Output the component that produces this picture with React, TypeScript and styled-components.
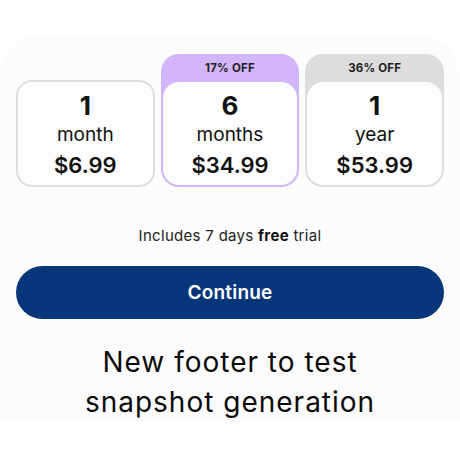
import React from "react";
import styled, { createGlobalStyle } from "styled-components";

const Global = createGlobalStyle`
  html, body { margin: 0; padding: 0; background: #ffffff; }
  body { font-family: Inter, "Noto Sans", sans-serif; color: #111111; }
  * { box-sizing: border-box; }
`;

const Sheet = styled.div`
  margin-top: 37px;
  background: #fcfcfc;
  border-radius: 36px 36px 0 0;
  padding: 17px 16px 0;
  height: 385px;
  display: flex;
  flex-direction: column;
`;

const PlanRow = styled.div`
  display: grid;
  grid-template-columns: repeat(3, 1fr);
  align-items: end;
  gap: 6px;
`;

const Plan = styled.div<{ $tone?: string }>`
  display: flex;
  flex-direction: column;
  border-radius: 18px;
  background: ${(p) => p.$tone ?? "transparent"};
  padding: ${(p) => (p.$tone ? "0 2px 2px" : "0")};
`;

const Badge = styled.div`
  height: 28px;
  display: flex;
  align-items: center;
  justify-content: center;
  font-size: 11.5px;
  font-weight: 700;
  letter-spacing: 0.2px;
  color: #222222;
`;

const Card = styled.div<{ $bordered?: boolean }>`
  height: ${(p) => (p.$bordered ? "107px" : "103px")};
  border: ${(p) => (p.$bordered ? "2px solid #dedede" : "none")};
  border-radius: 16px;
  background: #fdfdfd;
  display: flex;
  flex-direction: column;
  align-items: center;
  justify-content: center;
  padding-top: 4px;
`;

const Count = styled.div`
  font-size: 26px;
  font-weight: 700;
  line-height: 30px;
`;

const Unit = styled.div`
  font-size: 19px;
  font-weight: 400;
  line-height: 28px;
`;

const Price = styled.div`
  font-size: 22px;
  font-weight: 600;
  line-height: 30px;
  margin-top: 1px;
`;

const Trial = styled.p`
  margin: 40px 0 0;
  text-align: center;
  font-size: 15px;
  line-height: 18px;
  letter-spacing: 0.3px;
  color: #222222;
  b { font-weight: 700; color: #111; }
`;

const ContinueButton = styled.button`
  margin-top: 21px;
  height: 54px;
  width: 100%;
  border: none;
  border-radius: 27px;
  background: #07367a;
  color: #ffffff;
  font-family: Inter, "Noto Sans", sans-serif;
  font-size: 19px;
  font-weight: 600;
  letter-spacing: 0.2px;
`;

const Footer = styled.p`
  margin: 23px 0 0;
  text-align: center;
  font-size: 28px;
  line-height: 40px;
  font-weight: 400;
  letter-spacing: 1px;
  color: #0a0a0a;
`;

const plans = [
  { count: "1", unit: "month", price: "$6.99" },
  { count: "6", unit: "months", price: "$34.99", badge: "17% OFF", tone: "#d3b5fa" },
  { count: "1", unit: "year", price: "$53.99", badge: "36% OFF", tone: "#dddddd" },
];

export default function App() {
  return (
    <>
      <Global />
      <Sheet>
        <PlanRow>
          {plans.map((p, i) => (
            <Plan key={i} $tone={p.tone}>
              {p.badge && <Badge>{p.badge}</Badge>}
              <Card $bordered={!p.badge}>
                <Count>{p.count}</Count>
                <Unit>{p.unit}</Unit>
                <Price>{p.price}</Price>
              </Card>
            </Plan>
          ))}
        </PlanRow>
        <Trial>
          Includes 7 days <b>free</b> trial
        </Trial>
        <ContinueButton>Continue</ContinueButton>
        <Footer>
          New footer to test
          <br />
          snapshot generation
        </Footer>
      </Sheet>
    </>
  );
}
